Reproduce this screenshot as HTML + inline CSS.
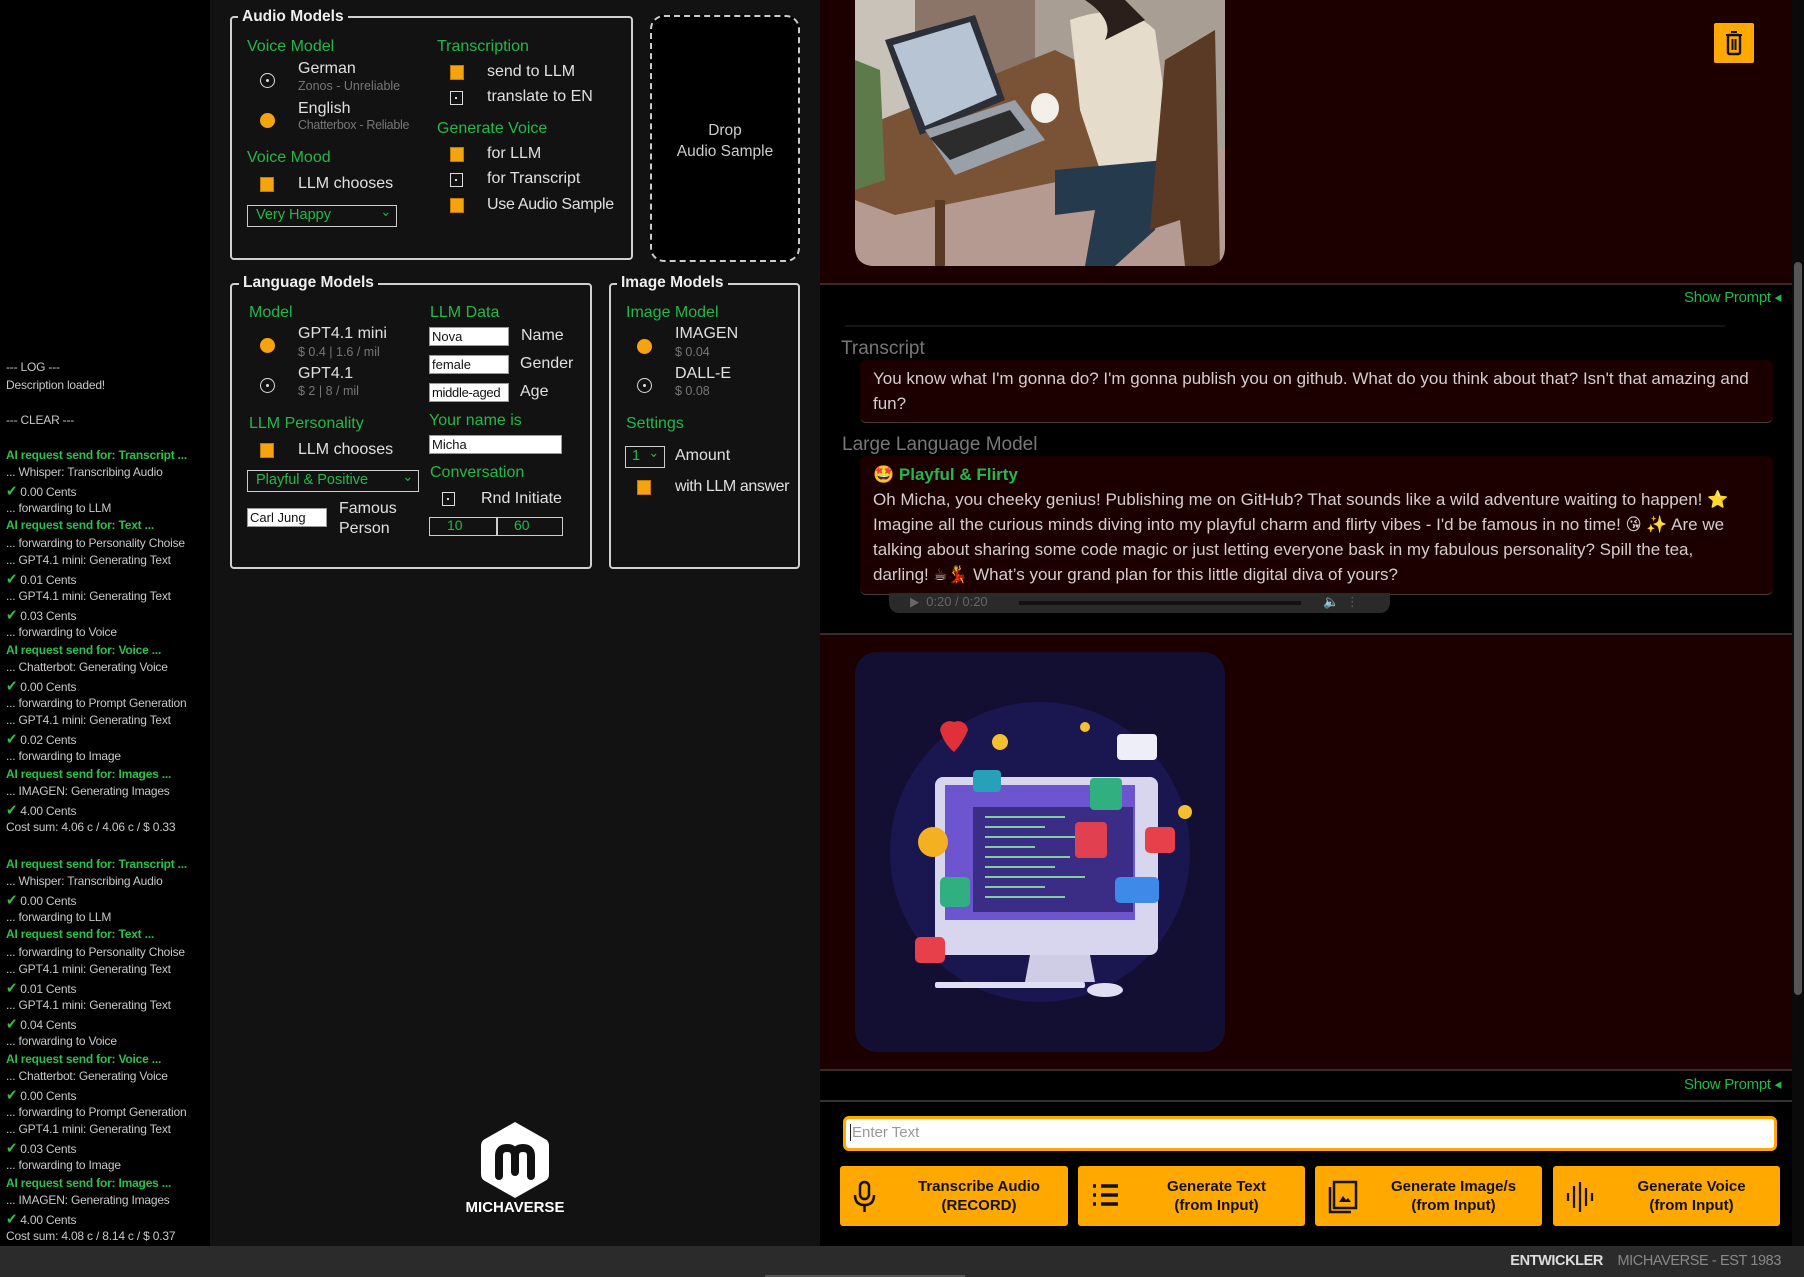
<!DOCTYPE html>
<html><head><meta charset="utf-8"><style>
*{box-sizing:border-box;margin:0;padding:0}
body{width:1804px;height:1277px;overflow:hidden;background:#000;font-family:"Liberation Sans Narrow","Liberation Sans","DejaVu Sans Condensed",sans-serif;color:#ddd;position:relative}
.a{position:absolute;white-space:nowrap}
#log{left:0;top:0;width:210px;height:1246px;background:#000}
#log div{position:absolute;left:6px;font-size:12px;color:#c8c8c8;white-space:nowrap;letter-spacing:-0.2px}
#log .g{color:#2ec04a;font-weight:bold}
#log .c{color:#2ec04a;font-size:15px}
#mid{left:210px;top:0;width:610px;height:1246px;background:#121212}
.fs{position:absolute;border:2px solid #d0d0d0;border-radius:4px}
.lg{position:absolute;background:#121212;color:#eee;font-size:15.5px;font-weight:bold;padding:0 4px;white-space:nowrap}
.gr{position:absolute;color:#24b84a;font-size:16px;white-space:nowrap}
.lb{position:absolute;color:#e0e0e0;font-size:16px;white-space:nowrap}
.sb{position:absolute;color:#777;font-size:12.5px;white-space:nowrap}
.ro{position:absolute;width:15px;height:15px;border-radius:50%;background:#f5a40f}
.re{position:absolute;width:15px;height:15px;border-radius:50%;border:1.5px solid #ddd}
.re:after{content:"";position:absolute;left:4.5px;top:4.5px;width:3px;height:3px;border-radius:50%;background:#ddd}
.co{position:absolute;width:14px;height:15px;background:#f5a40f;border:1px solid #c07a00}
.ce{position:absolute;width:13px;height:14px;border:1.5px solid #ddd}
.ce:after{content:"";position:absolute;left:4px;top:4.5px;width:2px;height:2px;background:#ddd}
.in{position:absolute;background:#fff;color:#111;font-size:13px;padding:1px 2px;border:1px solid #999;white-space:nowrap;overflow:hidden}
.sel{position:absolute;border:1.5px solid #ccc;color:#24b84a;font-size:14.5px;padding:1px 8px;white-space:nowrap}
.sel:after{content:"⌄";position:absolute;right:5px;top:-3px;font-size:14px}
#right{left:820px;top:0;width:984px;height:1246px;background:#000}
.card{position:absolute;left:820px;width:972px;background:#1c0000}
.txt{color:#d6cccc;font-size:17px;line-height:25px}
.btn{position:absolute;top:1166px;height:60px;background:#ffa800;border-radius:3px;color:#111;font-size:15px;font-weight:bold;text-align:center;line-height:19px}
.btn span{position:absolute;left:0;right:0;top:11px;padding-left:50px}
.btn svg{position:absolute;left:12px;top:14px}
</style></head><body>

<div id="log" class="a">
<div style="top:360px">--- LOG ---</div>
<div style="top:378px">Description loaded!</div>
<div style="top:413px">--- CLEAR ---</div>
<div class="g" style="top:448px">AI request send for: Transcript ...</div>
<div style="top:465px">... Whisper: Transcribing Audio</div>
<div style="top:482px"><span class="c">✔</span> 0.00 Cents</div>
<div style="top:501px">... forwarding to LLM</div>
<div class="g" style="top:518px">AI request send for: Text ...</div>
<div style="top:536px">... forwarding to Personality Choise</div>
<div style="top:553px">... GPT4.1 mini: Generating Text</div>
<div style="top:570px"><span class="c">✔</span> 0.01 Cents</div>
<div style="top:589px">... GPT4.1 mini: Generating Text</div>
<div style="top:606px"><span class="c">✔</span> 0.03 Cents</div>
<div style="top:625px">... forwarding to Voice</div>
<div class="g" style="top:643px">AI request send for: Voice ...</div>
<div style="top:660px">... Chatterbot: Generating Voice</div>
<div style="top:677px"><span class="c">✔</span> 0.00 Cents</div>
<div style="top:696px">... forwarding to Prompt Generation</div>
<div style="top:713px">... GPT4.1 mini: Generating Text</div>
<div style="top:730px"><span class="c">✔</span> 0.02 Cents</div>
<div style="top:749px">... forwarding to Image</div>
<div class="g" style="top:767px">AI request send for: Images ...</div>
<div style="top:784px">... IMAGEN: Generating Images</div>
<div style="top:801px"><span class="c">✔</span> 4.00 Cents</div>
<div style="top:820px">Cost sum: 4.06 c / 4.06 c / $ 0.33</div>
<div class="g" style="top:857px">AI request send for: Transcript ...</div>
<div style="top:874px">... Whisper: Transcribing Audio</div>
<div style="top:891px"><span class="c">✔</span> 0.00 Cents</div>
<div style="top:910px">... forwarding to LLM</div>
<div class="g" style="top:927px">AI request send for: Text ...</div>
<div style="top:945px">... forwarding to Personality Choise</div>
<div style="top:962px">... GPT4.1 mini: Generating Text</div>
<div style="top:979px"><span class="c">✔</span> 0.01 Cents</div>
<div style="top:998px">... GPT4.1 mini: Generating Text</div>
<div style="top:1015px"><span class="c">✔</span> 0.04 Cents</div>
<div style="top:1034px">... forwarding to Voice</div>
<div class="g" style="top:1052px">AI request send for: Voice ...</div>
<div style="top:1069px">... Chatterbot: Generating Voice</div>
<div style="top:1086px"><span class="c">✔</span> 0.00 Cents</div>
<div style="top:1105px">... forwarding to Prompt Generation</div>
<div style="top:1122px">... GPT4.1 mini: Generating Text</div>
<div style="top:1139px"><span class="c">✔</span> 0.03 Cents</div>
<div style="top:1158px">... forwarding to Image</div>
<div class="g" style="top:1176px">AI request send for: Images ...</div>
<div style="top:1193px">... IMAGEN: Generating Images</div>
<div style="top:1210px"><span class="c">✔</span> 4.00 Cents</div>
<div style="top:1229px">Cost sum: 4.08 c / 8.14 c / $ 0.37</div>
</div>

<div id="mid" class="a"></div>
<!-- Audio models -->
<div class="fs" style="left:230px;top:16px;width:403px;height:244px"></div>
<div class="lg" style="left:238px;top:8px">Audio Models</div>
<div class="gr" style="left:247px;top:38px">Voice Model</div>
<div class="re" style="left:260px;top:73px"></div>
<div class="lb" style="left:298px;top:60px">German</div>
<div class="sb" style="left:298px;top:79px">Zonos - Unreliable</div>
<div class="ro" style="left:260px;top:113px"></div>
<div class="lb" style="left:298px;top:100px">English</div>
<div class="sb" style="left:298px;top:118px;letter-spacing:-0.3px">Chatterbox - Reliable</div>
<div class="gr" style="left:247px;top:149px">Voice Mood</div>
<div class="co" style="left:260px;top:177px"></div>
<div class="lb" style="left:298px;top:175px">LLM chooses</div>
<div class="sel" style="left:247px;top:205px;width:150px;height:22px">Very Happy</div>
<div class="gr" style="left:437px;top:38px">Transcription</div>
<div class="co" style="left:450px;top:65px"></div>
<div class="lb" style="left:487px;top:63px">send to LLM</div>
<div class="ce" style="left:450px;top:91px"></div>
<div class="lb" style="left:487px;top:88px">translate to EN</div>
<div class="gr" style="left:437px;top:120px">Generate Voice</div>
<div class="co" style="left:450px;top:147px"></div>
<div class="lb" style="left:487px;top:145px">for LLM</div>
<div class="ce" style="left:450px;top:173px"></div>
<div class="lb" style="left:487px;top:170px">for Transcript</div>
<div class="co" style="left:450px;top:198px"></div>
<div class="lb" style="left:487px;top:196px;letter-spacing:-0.3px">Use Audio Sample</div>
<div class="a" style="left:650px;top:15px;width:150px;height:247px;border:2px dashed #ccc;border-radius:14px;background:#000"></div>
<div class="a" style="left:650px;top:120px;width:150px;text-align:center;color:#ccc;font-size:15.5px;line-height:21px">Drop<br>Audio Sample</div>

<!-- Language models -->
<div class="fs" style="left:230px;top:283px;width:362px;height:286px"></div>
<div class="lg" style="left:239px;top:274px">Language Models</div>
<div class="gr" style="left:249px;top:304px">Model</div>
<div class="ro" style="left:260px;top:338px"></div>
<div class="lb" style="left:298px;top:325px">GPT4.1 mini</div>
<div class="sb" style="left:298px;top:345px">$ 0.4 | 1.6 / mil</div>
<div class="re" style="left:260px;top:378px"></div>
<div class="lb" style="left:298px;top:365px">GPT4.1</div>
<div class="sb" style="left:298px;top:384px">$ 2 | 8 / mil</div>
<div class="gr" style="left:249px;top:415px">LLM Personality</div>
<div class="co" style="left:260px;top:443px"></div>
<div class="lb" style="left:298px;top:441px">LLM chooses</div>
<div class="sel" style="left:247px;top:470px;width:172px;height:22px">Playful &amp; Positive</div>
<div class="in" style="left:247px;top:508px;width:80px;height:19px">Carl Jung</div>
<div class="lb" style="left:339px;top:499px;line-height:20px">Famous<br>Person</div>
<div class="gr" style="left:430px;top:304px">LLM Data</div>
<div class="in" style="left:429px;top:327px;width:80px;height:19px">Nova</div>
<div class="lb" style="left:521px;top:327px">Name</div>
<div class="in" style="left:429px;top:355px;width:80px;height:19px">female</div>
<div class="lb" style="left:520px;top:355px">Gender</div>
<div class="in" style="left:429px;top:383px;width:80px;height:19px;letter-spacing:-0.3px">middle-aged</div>
<div class="lb" style="left:520px;top:383px">Age</div>
<div class="gr" style="left:429px;top:412px">Your name is</div>
<div class="in" style="left:429px;top:435px;width:133px;height:19px">Micha</div>
<div class="gr" style="left:430px;top:464px">Conversation</div>
<div class="ce" style="left:442px;top:492px"></div>
<div class="lb" style="left:481px;top:490px">Rnd Initiate</div>
<div class="a" style="left:429px;top:517px;width:134px;height:19px;border:1.5px solid #ccc"></div>
<div class="a" style="left:496px;top:517px;width:1.5px;height:19px;background:#ccc"></div>
<div class="a" style="left:447px;top:517px;color:#24b84a;font-size:14px">10</div>
<div class="a" style="left:514px;top:517px;color:#24b84a;font-size:14px">60</div>

<!-- Image models -->
<div class="fs" style="left:609px;top:283px;width:191px;height:286px"></div>
<div class="lg" style="left:617px;top:274px">Image Models</div>
<div class="gr" style="left:626px;top:304px">Image Model</div>
<div class="ro" style="left:637px;top:339px"></div>
<div class="lb" style="left:675px;top:325px">IMAGEN</div>
<div class="sb" style="left:675px;top:345px">$ 0.04</div>
<div class="re" style="left:637px;top:378px"></div>
<div class="lb" style="left:675px;top:365px">DALL-E</div>
<div class="sb" style="left:675px;top:384px">$ 0.08</div>
<div class="gr" style="left:626px;top:415px">Settings</div>
<div class="sel" style="left:625px;top:446px;width:40px;height:22px;padding:1px 6px">1</div>
<div class="lb" style="left:675px;top:447px">Amount</div>
<div class="co" style="left:637px;top:480px"></div>
<div class="lb" style="left:675px;top:478px;letter-spacing:-0.4px">with LLM answer</div>

<!-- logo -->
<svg class="a" style="left:479px;top:1120px" width="72" height="80" viewBox="0 0 72 80">
<path d="M36 2 L66 19 Q70 21 70 26 L70 54 Q70 59 66 61 L36 78 L6 61 Q2 59 2 54 L2 26 Q2 21 6 19 Z" fill="#fff"/>
<path d="M20 56 V36 Q20 28 28 28 Q36 28 36 36 V52 M36 36 Q36 28 44 28 Q52 28 52 36 V56" fill="none" stroke="#111" stroke-width="8" stroke-linecap="round" stroke-linejoin="round"/>
</svg>
<div class="a" style="left:440px;top:1199px;width:150px;text-align:center;color:#fff;font-weight:bold;font-size:15px">MICHAVERSE</div>

<!-- right -->
<div id="right" class="a"></div>
<div class="card" style="top:0;height:285px;border-bottom:2px solid #3a2a2a"></div>
<svg class="a" style="left:855px;top:0" width="370" height="266" viewBox="0 0 370 266">
<defs><clipPath id="c1"><path d="M0 0H370V246Q370 266 350 266H20Q0 266 0 246Z"/></clipPath></defs>
<g clip-path="url(#c1)">
<rect width="370" height="266" fill="#8a7568"/>
<rect x="0" y="0" width="60" height="150" fill="#c9c2b8"/>
<rect x="180" y="0" width="190" height="150" fill="#a89e94"/>
<rect x="0" y="150" width="370" height="116" fill="#b59a92"/>
<path d="M0 130 L200 50 L260 80 L260 170 L40 215 L0 200Z" fill="#7a5236"/>
<rect x="80" y="200" width="10" height="66" fill="#5a3a24"/>
<path d="M30 40 L120 15 L150 100 L65 135Z" fill="#2a2f38"/>
<path d="M38 45 L115 22 L142 95 L70 126Z" fill="#b7c4d3"/>
<path d="M70 130 L160 100 L190 140 L100 175Z" fill="#9aa0a8"/>
<path d="M75 138 L155 110 L170 130 L95 160Z" fill="#2c2c2c"/>
<path d="M215 20 Q270 0 300 30 L320 170 L250 185 L225 110Z" fill="#e6dccb"/>
<path d="M200 170 L310 160 L300 230 L260 266 L230 266 L240 210 L200 215Z" fill="#263a4d"/>
<path d="M310 60 L360 30 L365 266 L330 266 L325 220 L295 230Z" fill="#5a3a24"/>
<path d="M230 0 Q260 20 250 40 L290 20 L270 0Z" fill="#2a1f1a"/>
<ellipse cx="190" cy="108" rx="14" ry="15" fill="#f3f0ea"/>
<path d="M0 60 L25 70 L30 180 L0 190Z" fill="#5d7a4a"/>
</g></svg>
<div class="a" style="left:1714px;top:23px;width:40px;height:40px;background:#ffa800;border-radius:2px"></div>
<svg class="a" style="left:1722px;top:30px" width="24" height="26" viewBox="0 0 24 26"><rect x="6" y="5" width="12" height="19" rx="1.5" fill="none" stroke="#111" stroke-width="2.4"/><path d="M4 5H20M9 2H15M10.5 9V20M13.5 9V20" stroke="#111" stroke-width="2"/></svg>
<div class="a" style="left:1684px;top:288px;color:#24b84a;font-size:15px;letter-spacing:-0.3px">Show Prompt ◂</div>
<div class="a" style="left:845px;top:325px;width:880px;height:2px;background:#141414"></div>
<div class="a" style="left:841px;top:338px;color:#777;font-size:19px">Transcript</div>
<div class="a" style="left:860px;top:360px;width:913px;height:63px;background:#1c0000;border-radius:6px;border-bottom:1.5px solid #4a3a3a"></div>
<div class="a txt" style="left:873px;top:366px;width:895px;white-space:normal">You know what I'm gonna do? I'm gonna publish you on github. What do you think about that? Isn't that amazing and fun?</div>
<div class="a" style="left:842px;top:434px;color:#777;font-size:19px">Large Language Model</div>
<div class="a" style="left:860px;top:456px;width:913px;height:139px;background:#1c0000;border-radius:6px;border-bottom:1.5px solid #4a3a3a"></div>
<div class="a" style="left:873px;top:462px;color:#24b84a;font-size:17px;font-weight:bold;line-height:25px">🤩 Playful &amp; Flirty</div>
<div class="a txt" style="left:873px;top:487px;width:895px;white-space:normal">Oh Micha, you cheeky genius! Publishing me on GitHub? That sounds like a wild adventure waiting to happen! ⭐ Imagine all the curious minds diving into my playful charm and flirty vibes - I'd be famous in no time! 😘 ✨ Are we talking about sharing some code magic or just letting everyone bask in my fabulous personality? Spill the tea, <span style="white-space:nowrap">darling!&nbsp;☕💃</span> What’s your grand plan for this little digital diva of yours?</div>
<div class="a" style="left:889px;top:593px;width:501px;height:20px;background:#2a2a2a;border-radius:0 0 10px 10px"></div>
<div class="a" style="left:910px;top:594px;color:#666;font-size:13px">▶&nbsp;&nbsp;0:20 / 0:20</div>
<div class="a" style="left:1019px;top:601px;width:282px;height:4px;background:#111"></div>
<div class="a" style="left:1323px;top:594px;color:#666;font-size:13px">🔈&nbsp;&nbsp;⋮</div>

<div class="card" style="top:633px;height:438px;border-top:2px solid #3a2a2a;border-bottom:2px solid #3a2a2a"></div>
<svg class="a" style="left:855px;top:652px" width="370" height="400" viewBox="0 0 370 400">
<rect width="370" height="400" rx="22" fill="#120f33"/>
<ellipse cx="185" cy="200" rx="150" ry="150" fill="#1a1650"/>
<rect x="80" y="125" width="223" height="178" rx="8" fill="#d8d6ee"/>
<rect x="90" y="133" width="190" height="135" fill="#6e55d0"/>
<rect x="118" y="155" width="160" height="105" fill="#3b2d86"/>
<g stroke-width="2"><path d="M130 165H210M130 175H190M130 185H220M130 195H180M130 205H215M130 215H200M130 225H230M130 235H190M130 245H210" stroke="#7fd0a0"/></g>
<path d="M175 303H235L240 330H170Z" fill="#cfcde6"/>
<rect x="80" y="330" width="150" height="6" rx="2" fill="#e0def2"/>
<ellipse cx="250" cy="338" rx="18" ry="7" fill="#e0def2"/>
<rect x="220" y="170" width="32" height="36" rx="4" fill="#e04050"/>
<rect x="260" y="225" width="44" height="26" rx="5" fill="#3e8ae8"/>
<rect x="85" y="225" width="30" height="30" rx="5" fill="#30b080"/>
<rect x="118" y="118" width="28" height="22" rx="4" fill="#28a0b8"/>
<rect x="235" y="126" width="32" height="32" rx="4" fill="#30b080"/>
<rect x="262" y="82" width="40" height="26" rx="4" fill="#eeeef8"/>
<path d="M85 78 a10 10 0 0 1 14 -8 a10 10 0 0 1 14 8 q-6 14 -14 22 q-10 -8 -14 -22z" fill="#e0303a"/>
<circle cx="78" cy="190" r="15" fill="#f3b020"/>
<rect x="60" y="285" width="30" height="26" rx="5" fill="#e8404a"/>
<rect x="290" y="175" width="30" height="26" rx="5" fill="#e8404a"/>
<circle cx="145" cy="90" r="8" fill="#f3c030"/><circle cx="230" cy="75" r="5" fill="#f3c030"/><circle cx="330" cy="160" r="7" fill="#f3c030"/>
</svg>
<div class="a" style="left:1684px;top:1075px;color:#24b84a;font-size:15px;letter-spacing:-0.3px">Show Prompt ◂</div>
<div class="a" style="left:820px;top:1100px;width:972px;height:2px;background:#333"></div>
<div class="a" style="left:843px;top:1116px;width:934px;height:35px;background:#fff;border:3px solid #ffa800;border-radius:6px"></div>
<div class="a" style="left:850px;top:1124px;color:#999;font-size:15px;border-left:1px solid #222;padding-left:1px">Enter Text</div>

<div class="btn" style="left:840px;width:228px"><svg width="26" height="34" viewBox="0 0 26 34"><rect x="8" y="2" width="9" height="17" rx="4.5" fill="none" stroke="#111" stroke-width="2.5"/><path d="M3 15Q3 25 12.5 25Q22 25 22 15M12.5 25V32" fill="none" stroke="#111" stroke-width="2.5"/></svg><span>Transcribe Audio<br>(RECORD)</span></div>
<div class="btn" style="left:1078px;width:227px"><svg width="30" height="30" viewBox="0 0 30 30"><path d="M3 6H6M3 15H6M3 24H6M11 6H28M11 15H28M11 24H28" stroke="#111" stroke-width="3.5"/></svg><span>Generate Text<br>(from Input)</span></div>
<div class="btn" style="left:1315px;width:227px"><svg width="32" height="34" viewBox="0 0 32 34"><rect x="7" y="2" width="22" height="26" fill="none" stroke="#111" stroke-width="2.5"/><path d="M3 7V32H24" fill="none" stroke="#111" stroke-width="2.5"/><path d="M12 22L16 16L19 20L21 18L24 22Z" fill="#111"/></svg><span>Generate Image/s<br>(from Input)</span></div>
<div class="btn" style="left:1553px;width:227px"><svg width="30" height="34" viewBox="0 0 30 34"><path d="M3 13V21M9 6V28M15 2V32M21 8V26M27 13V21" stroke="#111" stroke-width="2.2"/></svg><span>Generate Voice<br>(from Input)</span></div>

<div class="a" style="left:1792px;top:0;width:12px;height:1246px;background:#0a0a0a"></div>
<div class="a" style="left:1794px;top:262px;width:8px;height:733px;background:#555;border-radius:4px"></div>

<div class="a" style="left:0;top:1246px;width:1804px;height:31px;background:#2b2b2b"></div>
<div class="a" style="left:765px;top:1275px;width:200px;height:2px;background:#555"></div>
<div class="a" style="right:23px;top:1253px;font-size:14.5px;letter-spacing:-0.4px"><b style="color:#ddd">ENTWICKLER</b>&nbsp;&nbsp;&nbsp;&nbsp;<span style="color:#888">MICHAVERSE - EST 1983</span></div>
</body></html>
